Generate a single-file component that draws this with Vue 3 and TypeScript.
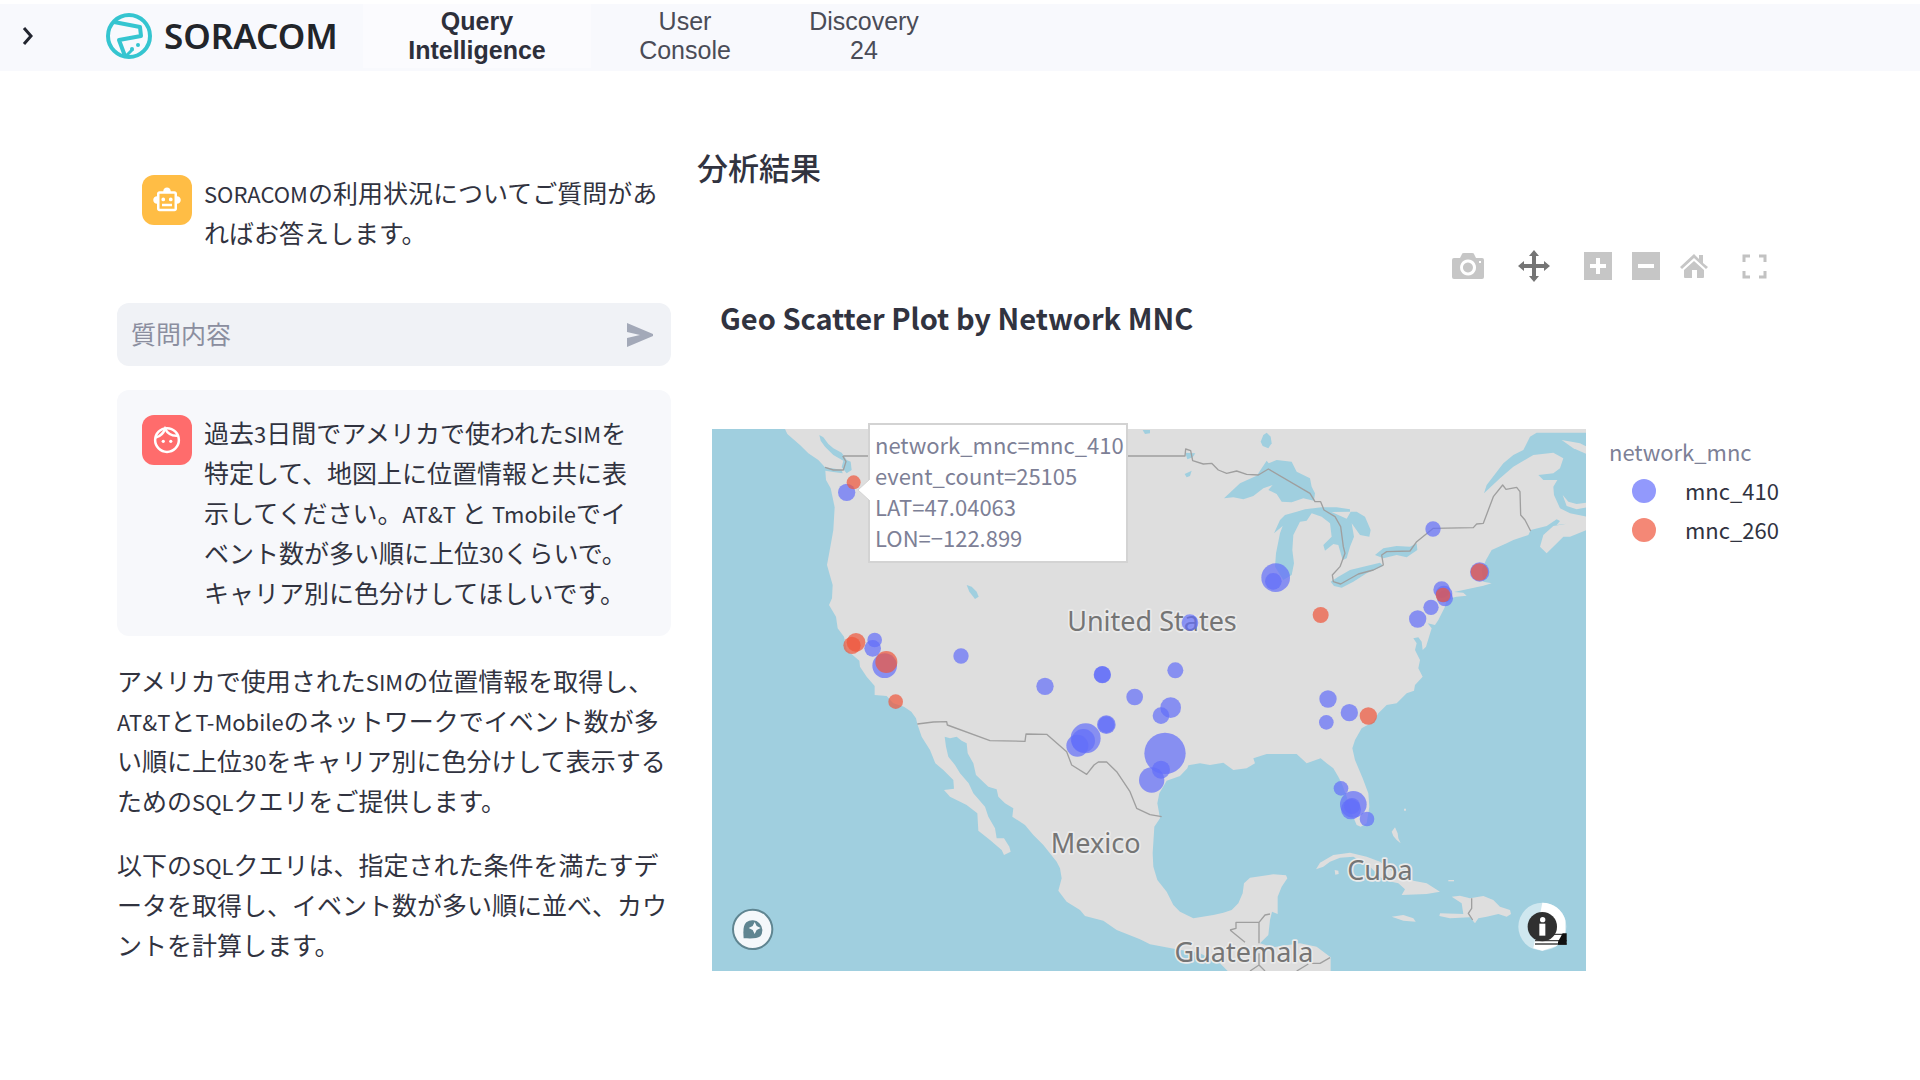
<script setup lang="ts">
import { ref } from 'vue'

interface Piece {
  text: string
  latin: boolean
}

interface Marker {
  x: number
  y: number
  r: number
  net: 'a' | 'b'
}

const question = ref('')

// Latin runs are set slightly smaller than the Japanese around them.
function lines(...rows: string[]): Piece[][] {
  return rows.map((row) =>
    row
      .split(/([A-Za-z0-9&-]+)/)
      .filter((t) => t.length > 0)
      .map((t) => ({ text: t, latin: /^[A-Za-z0-9&-]+$/.test(t) })),
  )
}

const greeting = lines('SORACOMの利用状況についてご質問があ', 'ればお答えします。')
const userMessage = lines(
  '過去3日間でアメリカで使われたSIMを',
  '特定して、地図上に位置情報と共に表',
  '示してください。AT&T と Tmobileでイ',
  'ベント数が多い順に上位30くらいで。',
  'キャリア別に色分けしてほしいです。',
)
const answers = [
  lines(
    'アメリカで使用されたSIMの位置情報を取得し、',
    'AT&TとT-Mobileのネットワークでイベント数が多',
    'い順に上位30をキャリア別に色分けして表示する',
    'ためのSQLクエリをご提供します。',
  ),
  lines(
    '以下のSQLクエリは、指定された条件を満たすデ',
    'ータを取得し、イベント数が多い順に並べ、カウ',
    'ントを計算します。',
  ),
]

const m = (net: 'a' | 'b', x: number, y: number, r: number): Marker => ({ net, x, y, r })

const markers: Marker[] = [
  m('a', 440, 217, 26),
  m('a', 524, 660, 22),
  m('a', 518, 685, 25),
  m('a', 554, 737, 37),
  m('a', 783, 708, 23),
  m('a', 1035, 799, 26),
  m('a', 1207, 764, 26),
  m('a', 1207, 764, 25),
  m('a', 1304, 831, 25),
  m('a', 1219, 914, 28),
  m('a', 1219, 914, 25),
  m('a', 1157, 955, 45),
  m('a', 1132, 977, 33),
  m('a', 1150, 962, 35),
  m('a', 1412, 863, 31),
  m('a', 1383, 887, 25),
  m('a', 1395, 1000, 62),
  m('a', 1355, 1080, 38),
  m('a', 1383, 1049, 27),
  m('a', 1727, 473, 43),
  m('a', 1720, 484, 25),
  m('a', 1470, 608, 25),
  m('a', 1426, 751, 24),
  m('a', 2199, 327, 23),
  m('a', 2339, 456, 29),
  m('a', 2225, 509, 25),
  m('a', 2232, 522, 25),
  m('a', 2235, 535, 24),
  m('a', 2193, 562, 23),
  m('a', 2153, 597, 26),
  m('a', 1884, 837, 26),
  m('a', 1948, 878, 26),
  m('a', 1879, 907, 22),
  m('a', 1923, 1105, 22),
  m('a', 1960, 1153, 40),
  m('a', 1953, 1168, 30),
  m('a', 1956, 1158, 24),
  m('a', 2001, 1197, 22),
  m('b', 461, 187, 21),
  m('b', 456, 676, 26),
  m('b', 468, 667, 28),
  m('b', 559, 726, 33),
  m('b', 587, 845, 22),
  m('b', 1862, 585, 24),
  m('b', 2338, 456, 26),
  m('b', 2229, 525, 22),
  m('b', 2005, 888, 26),
]

const land =
  'M255 27 L262 42 300 75 325 100 355 120 375 142 405 146 425 150 428 160 400 156 376 152 378 180 392 205 404 262 400 330 392 375 381 435 398 495 396 535 387 555 408 590 413 625 432 650 440 690 458 705 478 722 480 740 500 770 524 798 524 825 560 828 580 850 612 860 634 875 648 895 652 912 665 950 690 990 706 1030 730 1050 760 1080 762 1106 732 1110 750 1130 800 1155 832 1180 835 1232 870 1260 905 1290 912 1305 932 1295 928 1280 912 1255 890 1255 885 1225 865 1190 855 1160 820 1120 806 1090 780 1060 765 1035 745 1010 738 980 734 950 750 955 770 950 785 962 800 970 803 1000 820 1030 828 1065 865 1100 890 1108 895 1130 915 1150 940 1165 937 1190 975 1215 1000 1245 1030 1275 1070 1325 1080 1345 1085 1375 1075 1412 1100 1445 1140 1470 1155 1488 1210 1502 1250 1530 1320 1558 1350 1573 1430 1588 1500 1600 1560 1630 1590 1660 1892 1660 1892 1612 1850 1580 1800 1570 1720 1582 1680 1570 1705 1545 1710 1500 1716 1475 1733 1482 1733 1430 1745 1400 1762 1375 1758 1366 1720 1363 1650 1373 1632 1390 1628 1420 1615 1450 1595 1470 1570 1478 1540 1485 1480 1495 1440 1475 1420 1455 1400 1415 1372 1380 1360 1340 1358 1300 1363 1220 1380 1195 1372 1150 1378 1120 1400 1082 1440 1068 1462 1045 1465 1036 1500 1030 1530 1035 1570 1028 1600 1050 1640 1045 1665 1030 1660 1015 1700 1002 1790 1002 1820 1030 1862 1015 1880 1030 1900 1045 1915 1070 1925 1090 1940 1130 1955 1180 1970 1215 1982 1220 2000 1210 2008 1160 2005 1120 1988 1075 1965 1020 1957 985 1965 960 1985 925 2020 905 2035 880 2060 855 2090 850 2120 820 2142 812 2145 795 2168 770 2155 745 2160 720 2145 690 2150 670 2140 655 2155 652 2165 665 2168 690 2178 680 2195 625 2183 610 2205 615 2215 600 2235 560 2240 537 2270 530 2300 527 2290 518 2262 516 2350 497 2375 490 2350 485 2345 450 2358 420 2375 390 2420 370 2440 360 2485 345 2492 330 2540 318 2570 298 2580 303 2570 315 2600 311 2560 318 2530 345 2520 380 2540 400 2575 365 2590 350 2610 350 2660 330 2660 290 2610 280 2580 265 2562 225 2560 200 2572 180 2530 180 2515 165 2560 160 2580 145 2590 115 2560 98 2500 105 2440 140 2400 175 2352 220 2360 195 2410 130 2440 105 2470 90 2490 50 2510 38 2660 38 2660 27 Z'

const islands = [
  'M2585 60 L2640 70 2660 80 2660 102 2620 85 Z',
  'M2588 225 L2605 245 2630 252 2660 248 2660 262 2630 268 2600 258 Z',
  'M1848 1348 L1860 1328 1900 1305 1950 1298 2000 1310 2040 1325 2080 1355 2140 1382 2180 1390 2220 1415 2180 1422 2105 1425 2115 1408 2095 1390 2050 1380 2010 1340 1960 1310 1920 1313 1890 1325 1870 1340 Z',
  'M1904 1350 L1915 1352 1916 1362 1906 1364 Z',
  'M2255 1430 L2280 1427 2310 1435 2350 1428 2380 1440 2400 1460 2430 1470 2433 1482 2420 1490 2395 1482 2360 1490 2335 1495 2325 1510 2310 1492 2250 1495 2218 1488 2220 1480 2290 1482 2285 1450 Z',
  'M2075 1490 L2110 1485 2140 1495 2147 1505 2110 1502 Z',
  'M2075 1235 L2085 1222 2093 1240 2095 1255 2102 1270 2090 1260 2080 1248 Z',
  'M2245 1380 L2262 1380 2262 1384 2245 1384 Z',
  'M2112 1166 L2118 1166 2118 1172 2112 1172 Z',
]

const lakes = [
  'M358 45 L370 52 385 72 400 85 425 98 440 120 452 125 455 150 440 160 425 142 430 122 400 105 375 80 362 62 Z',
  'M800 495 L815 500 830 515 836 530 825 537 808 515 Z',
  'M1328 30 L1350 30 1350 40 1335 42 Z',
  'M1690 45 L1700 38 1712 50 1715 70 1705 85 1688 78 1682 65 Z',
  'M1456 98 L1486 100 1478 112 1462 118 Z',
  'M1454 162 L1475 152 1470 168 1460 172 Z',
  'M1572 235 L1620 190 1670 167 1685 145 1700 122 1706 130 1730 120 1775 125 1790 155 1830 175 1835 200 1845 220 1842 242 1810 235 1775 247 1745 245 1730 222 1705 210 1718 195 1690 205 1660 228 1630 238 1600 232 Z',
  'M1722 340 L1740 300 1755 285 1790 275 1815 268 1865 262 1910 262 1950 268 1950 275 1895 276 1940 296 1952 275 1970 275 1995 290 2012 330 2008 350 1980 345 1955 310 1962 350 1950 380 1940 415 1928 420 1915 375 1900 372 1875 392 1870 375 1895 350 1890 310 1865 290 1835 280 1820 302 1800 305 1780 345 1777 390 1782 430 1775 465 1750 480 1725 440 1728 400 1740 340 1748 318 Z',
  'M1892 485 L1915 470 1950 450 1990 440 2040 428 2050 438 2000 460 1960 485 1925 503 1902 498 Z',
  'M2025 405 L2050 385 2090 378 2130 380 2150 370 2152 390 2120 412 2090 405 2050 415 Z',
]

const borders =
  'M430 108 H1455 L1457 87 1472 92 1478 122 1510 132 1535 130 1555 150 1580 160 1610 153 1640 163 1675 165 1705 147 1830 220 1845 245 1862 245 1872 270 1905 290 1922 320 1930 380 1935 400 1920 440 1897 465 1900 485 1922 492 1975 462 2020 450 2050 435 2045 405 2060 395 2130 393 2150 365 2200 325 2320 323 2330 312 2350 310 2365 270 2380 230 2408 195 2418 208 2450 202 2460 215 2462 285 2475 300 2492 333 M375 142 L400 150 430 150 438 125 428 108 M652 912 L700 906 740 905 742 915 870 962 975 964 978 942 1040 943 1100 995 1115 1035 1160 1063 1182 1035 1195 1026 1220 1026 1250 1055 1290 1115 1310 1165 1350 1184 1385 1190 M1590 1530 L1608 1525 1608 1507 1677 1507 1677 1570 M1677 1507 L1695 1485 1710 1482 M1590 1530 L1635 1567 M1677 1600 L1677 1635 1650 1653 M1677 1635 L1695 1653 M1835 1630 L1860 1630 1890 1613 M1790 1653 L1825 1632 M2315 1435 L2315 1465 2305 1480 2318 1500'

const labels = [
  { text: 'United States', x: 1356, y: 632 },
  { text: 'Mexico', x: 1187, y: 1300 },
  { text: 'Cuba', x: 2040, y: 1380 },
  { text: 'Guatemala', x: 1632, y: 1625 },
]
</script>

<template>
  <div class="page">
    <header class="topbar">
      <button class="expand" type="button" aria-label="Open sidebar">
        <svg width="12" height="20" viewBox="0 0 12 20"><path d="M2 2 L9 10 L2 18" fill="none" stroke="#22252f" stroke-width="3" /></svg>
      </button>
      <a class="brand" href="#">
        <svg width="46" height="46" viewBox="0 0 46 46" fill="none" stroke="#35c5d0">
          <circle cx="23" cy="23" r="21" stroke-width="4" />
          <path d="M8 9 L34 14 L35 23 L13 27 L19 43" stroke-width="4" stroke-linejoin="round" />
          <path d="M20 43 L27 36" stroke-width="3" />
          <circle cx="26" cy="36" r="2" fill="#35c5d0" stroke="none" />
          <circle cx="32" cy="32" r="2" fill="#35c5d0" stroke="none" />
        </svg>
        <span>SORACOM</span>
      </a>
      <nav class="tabs">
        <a class="tab active" href="#">Query<br />Intelligence</a>
        <a class="tab" href="#">User<br />Console</a>
        <a class="tab" href="#">Discovery<br />24</a>
      </nav>
    </header>

    <main class="content">
      <section class="chat">
        <article class="message">
          <span class="avatar bot">
            <svg width="30" height="30" viewBox="0 0 24 24" fill="#fff" fill-rule="evenodd">
              <path d="M20 9V7c0-1.100-.9-2-2-2h-3c0-1.660-1.340-3-3-3S9 3.340 9 5H6c-1.100 0-2 .9-2 2v2c-1.660 0-3 1.340-3 3s1.340 3 3 3v4c0 1.100.9 2 2 2h12c1.100 0 2-.9 2-2v-4c1.660 0 3-1.340 3-3s-1.340-3-3-3zm-2 10H6V7h12v12z" />
              <path d="M7.500 11.500a1.500 1.500 0 1 0 3 0 1.500 1.500 0 1 0-3 0zM13.500 11.500a1.500 1.500 0 1 0 3 0 1.500 1.500 0 1 0-3 0zM8 15h8v2H8z" />
            </svg>
          </span>
          <p class="text">
            <span v-for="(line, n) in greeting" :key="n" class="line"><span v-for="(p, i) in line" :key="i" :class="{ latin: p.latin }">{{ p.text }}</span></span>
          </p>
        </article>

        <form class="ask" @submit.prevent>
          <input v-model="question" type="text" placeholder="質問内容" aria-label="質問内容" />
          <button type="submit" aria-label="送信">
            <svg width="28" height="26" viewBox="0 0 28 26"><path d="M1 1 L27 12 27 14 1 25 V16 L14 13 1 10 Z" fill="#a3a9b8" /></svg>
          </button>
        </form>

        <article class="message user">
          <span class="avatar person">
            <svg width="30" height="30" viewBox="0 0 24 24" fill="none" stroke="#fff" stroke-width="2">
              <circle cx="12" cy="12" r="9.500" />
              <path d="M3 10 C7 9 9 7 10.500 3 C12.500 7 16 9 21 8.500" />
              <circle cx="9" cy="13" r="1.300" fill="#fff" stroke="none" />
              <circle cx="15" cy="13" r="1.300" fill="#fff" stroke="none" />
            </svg>
          </span>
          <p class="text">
            <span v-for="(line, n) in userMessage" :key="n" class="line"><span v-for="(p, i) in line" :key="i" :class="{ latin: p.latin }">{{ p.text }}</span></span>
          </p>
        </article>

        <p v-for="(answer, k) in answers" :key="k" class="text">
          <span v-for="(line, n) in answer" :key="n" class="line"><span v-for="(p, i) in line" :key="i" :class="{ latin: p.latin }">{{ p.text }}</span></span>
        </p>
      </section>

      <section class="result">
        <h2>分析結果</h2>

        <div class="modebar">
          <button type="button" aria-label="Download plot as a png">
            <svg width="32" height="26" viewBox="0 0 32 26" fill="#c6c6c6" fill-rule="evenodd">
              <path d="M2 5 H8 L10 1 Q10 0 12 0 H20 Q22 0 22 1 L24 5 H30 Q32 5 32 7 V24 Q32 26 30 26 H2 Q0 26 0 24 V7 Q0 5 2 5 Z M16 6.500 a8 8 0 1 0 .1 0 Z M16 9.500 a5 5 0 1 1 -.1 0 Z M27 8 h2 v2 h-2 Z" />
            </svg>
          </button>
          <button type="button" aria-label="Pan">
            <svg width="32" height="32" viewBox="0 0 32 32" fill="#757575">
              <path d="M16 0 L21 6 H18 V14 H26 V11 L32 16 L26 21 V18 H18 V26 H21 L16 32 L11 26 H14 V18 H6 V21 L0 16 L6 11 V14 H14 V6 H11 Z" />
            </svg>
          </button>
          <span class="zoom">
            <button type="button" aria-label="Zoom in">
              <svg width="28" height="28" viewBox="0 0 28 28"><path d="M0 0H28V28H0Z" fill="#c6c6c6" /><path d="M14 6V22M6 14H22" stroke="#fff" stroke-width="4" /></svg>
            </button>
            <button type="button" aria-label="Zoom out">
              <svg width="28" height="28" viewBox="0 0 28 28"><path d="M0 0H28V28H0Z" fill="#c6c6c6" /><path d="M6 14H22" stroke="#fff" stroke-width="4" /></svg>
            </button>
            <button type="button" aria-label="Reset view">
              <svg width="28" height="26" viewBox="0 0 28 26" fill="#c6c6c6">
                <path d="M14 1 L19 6 V2 H23 V10 L28 14 L26 16 L14 5 L2 16 L0 14 Z" />
                <path d="M14 8 L24 17 V24 Q24 25 23 25 H17 V17 H12 V25 H5 Q4 25 4 24 V17 Z" />
              </svg>
            </button>
          </span>
          <button type="button" aria-label="Fullscreen">
            <svg width="25" height="25" viewBox="0 0 25 25" fill="none" stroke="#c2c2c2" stroke-width="3">
              <path d="M2 8 V2 H8 M17 2 H23 V8 M23 17 V23 H17 M8 23 H2 V17" />
            </svg>
          </button>
        </div>

        <h3>Geo Scatter Plot by Network MNC</h3>

        <div class="plot">
          <div class="map">
            <svg class="canvas" viewBox="36 27 2622 1626" role="img" aria-label="Geo Scatter Plot by Network MNC">
              <rect x="36" y="27" width="2622" height="1626" fill="#a0cfdf" />
              <path :d="land" fill="#dedede" />
              <path v-for="d in islands" :key="d" :d="d" fill="#dedede" />
              <path v-for="d in lakes" :key="d" :d="d" fill="#a0cfdf" />
              <path :d="borders" fill="none" stroke="#9f9f9f" stroke-width="4" stroke-linejoin="round" />
              <text v-for="l in labels" :key="l.text" class="place" :x="l.x" :y="l.y" text-anchor="middle">{{ l.text }}</text>
              <circle v-for="(p, i) in markers" :key="i" :cx="p.x" :cy="p.y" :r="p.r" :fill="p.net === 'a' ? '#636efa' : '#ef553b'" fill-opacity="0.7" />

              <circle cx="158" cy="1528" r="59" fill="#f4f8fb" stroke="#5f8591" stroke-width="6" />
              <path d="M131 1555 C129 1530 130 1516 139 1507 A30 30 0 0 1 181 1549 C172 1556 156 1556 131 1555 Z" fill="#5f8591" />
              <path d="M164 1506 L170 1518 182 1524 170 1530 164 1542 158 1530 146 1524 158 1518 Z" fill="#f4f8fb" />

              <circle cx="2527" cy="1520" r="72" fill="#cfe7ef" />
              <path d="M2527 1448 A72 72 0 0 1 2596 1500 L2596 1545 L2570 1578 L2527 1592 L2500 1585 Z" fill="#fff" />
              <path d="M2505 1562 H2600 M2505 1572 H2600 M2560 1543 H2590" stroke="#444" stroke-width="4" />
              <path d="M2574 1565 L2588 1540 H2600 V1574 H2574 Z" fill="#111" />
              <circle cx="2527" cy="1520" r="44" fill="#303030" />
              <circle cx="2528" cy="1499" r="8" fill="#fff" />
              <path d="M2518 1511 H2536 V1547 H2518 Z" fill="#fff" />
            </svg>
            <div class="tip" role="tooltip">
              <svg class="pointer" width="13" height="22" viewBox="0 0 13 22"><path d="M13 0 L1 11 L13 22" fill="#fff" stroke="#d3d3d3" /></svg>
              network_mnc=mnc_410<br />event_count=25105<br />LAT=47.04063<br />LON=−122.899
            </div>
          </div>
          <aside class="legend">
            <h4>network_mnc</h4>
            <ul>
              <li><i class="dot a"></i>mnc_410</li>
              <li><i class="dot b"></i>mnc_260</li>
            </ul>
          </aside>
        </div>
      </section>
    </main>
  </div>
</template>

<style>
body {
  margin: 0;
  background: #fff;
}
</style>

<style scoped>
.page {
  padding-top: 4px;
  color: #31333f;
  font-family: 'Noto Sans CJK JP', 'Noto Sans', sans-serif;
  font-size: 25px;
}

h2,
h3,
h4,
p,
ul {
  margin: 0;
  padding: 0;
}

svg {
  display: block;
}

button {
  padding: 0;
  border: 0;
  background: none;
  cursor: pointer;
}

.topbar {
  display: flex;
  align-items: center;
  box-sizing: border-box;
  height: 67px;
  padding-bottom: 3px;
  background: #f8f9fd;
}

.expand {
  margin-left: 22px;
}

.brand {
  display: flex;
  align-items: center;
  gap: 12px;
  width: 257px;
  margin-left: 72px;
  color: #22252a;
  font-family: 'Noto Sans', sans-serif;
  font-size: 35px;
  font-weight: 600;
  line-height: 46px;
  text-decoration: none;
}

.tabs {
  display: grid;
  grid-template-columns: 228px 188px 170px;
}

.tab {
  padding: 3px 0;
  color: #4a4c57;
  font-family: 'Liberation Sans', Arial, sans-serif;
  font-size: 25px;
  line-height: 29px;
  text-align: center;
  text-decoration: none;
}

.tab.active {
  background: #fbfbfe;
  color: #2d2f3b;
  font-weight: 700;
}

.content {
  display: grid;
  grid-template-columns: 554px minmax(0, 1fr);
  gap: 26px;
  padding: 79px 117px 0;
}

.chat {
  display: flex;
  flex-direction: column;
  gap: 24px;
}

.message {
  display: flex;
  gap: 12px;
  padding: 22px 8px 24px 25px;
  border-radius: 12px;
}

.message.user {
  background: #f7f8fb;
}

.avatar {
  display: flex;
  flex: none;
  align-items: center;
  justify-content: center;
  width: 50px;
  height: 50px;
  margin-top: 3px;
  border-radius: 12px;
}

.avatar.bot {
  background: #ffbd45;
}

.avatar.person {
  background: #ff6c6c;
}

.text {
  line-height: 40px;
}

.line {
  display: block;
  height: 40px;
  white-space: nowrap;
}

.latin {
  font-size: 22px;
  line-height: 1;
}

.ask {
  display: flex;
  align-items: center;
  height: 63px;
  margin-top: 3px;
  padding: 0 17px 0 14px;
  border-radius: 12px;
  background: #f0f2f6;
}

.ask input {
  flex: 1;
  min-width: 0;
  padding: 0 0 4px;
  border: 0;
  outline: 0;
  background: none;
  color: #31333f;
  font: inherit;
}

.ask input::placeholder {
  color: #8b8e9f;
  opacity: 1;
}

.result h2 {
  font-size: 31px;
  font-weight: 500;
  line-height: 34px;
}

.modebar {
  display: flex;
  align-items: center;
  justify-content: flex-end;
  gap: 34px;
  height: 32px;
  margin: 66px 36px 0 0;
}

.zoom {
  display: flex;
  align-items: center;
  gap: 20px;
}

.result h3 {
  margin-top: 15px;
  padding-left: 23px;
  font-size: 29px;
  font-weight: 700;
  line-height: 40px;
}

.plot {
  display: flex;
  align-items: flex-start;
  gap: 23px;
  margin: 92px 0 0 15px;
}

.map {
  position: relative;
  flex: 1;
  min-width: 0;
}

.canvas {
  width: 100%;
  height: auto;
}

.place {
  fill: #757575;
  stroke: #eaeaea;
  stroke-width: 10px;
  stroke-linejoin: round;
  paint-order: stroke;
  font-family: 'Noto Sans', sans-serif;
  font-size: 81px;
}

.tip {
  position: absolute;
  top: -6px;
  left: 156px;
  padding: 4px 2px 8px 5px;
  border: 2px solid #d3d3d3;
  background: #fff;
  color: #7d8096;
  font-size: 22px;
  line-height: 31px;
  white-space: nowrap;
}

.pointer {
  position: absolute;
  top: 54px;
  left: -13px;
}

.legend {
  width: 194px;
}

.legend h4 {
  margin-top: 3px;
  color: #7d8096;
  font-size: 22px;
  font-weight: 400;
  line-height: 39px;
}

.legend ul {
  list-style: none;
}

.legend li {
  display: flex;
  align-items: center;
  gap: 29px;
  padding-left: 23px;
  font-size: 22px;
  line-height: 39px;
}

.dot {
  width: 24px;
  height: 24px;
  border-radius: 50%;
}

.dot.a {
  background: #9299fc;
}

.dot.b {
  background: #f48876;
}
</style>
